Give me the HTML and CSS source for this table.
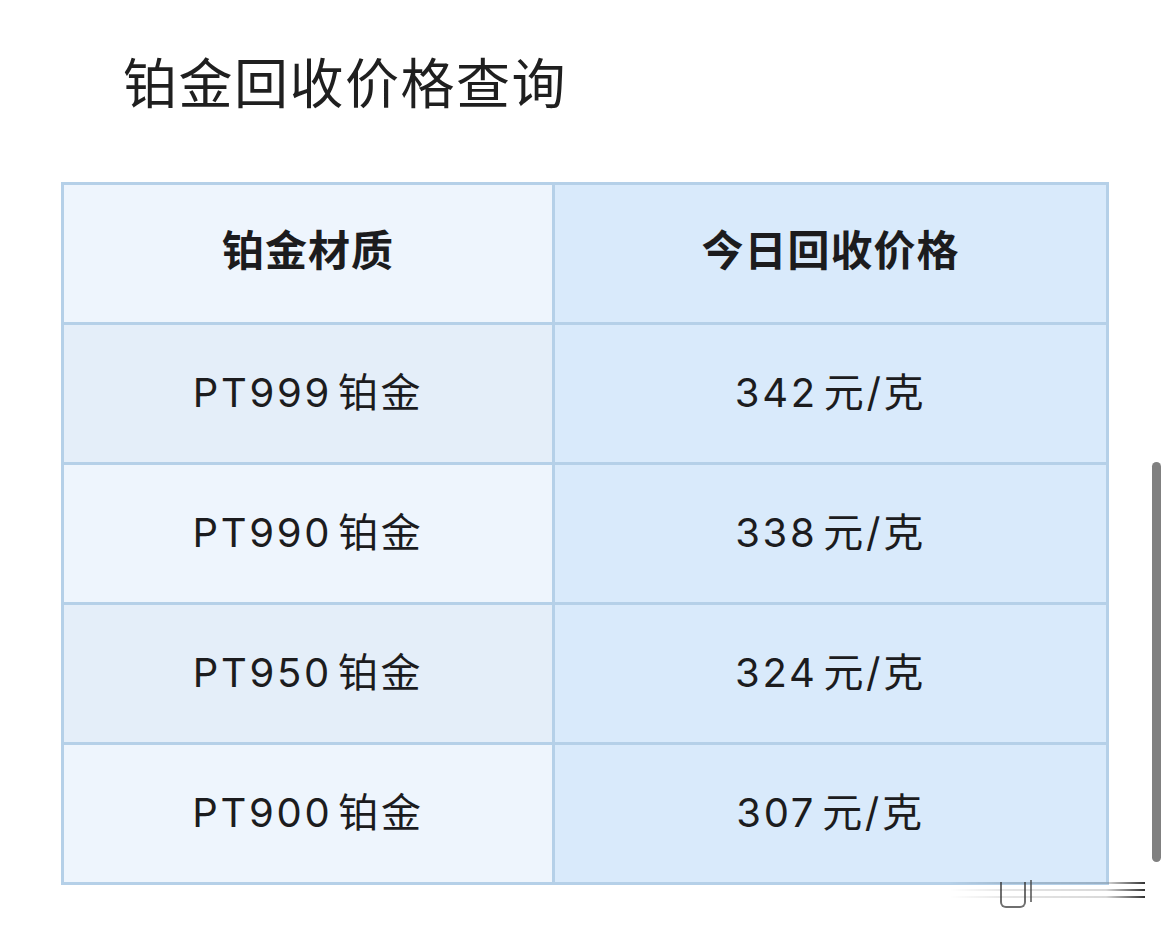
FILE: index.html
```html
<!DOCTYPE html>
<html lang="zh">
<head>
<meta charset="utf-8">
<title>铂金回收价格查询</title>
<link rel="stylesheet" href="styles.css">
</head>
<body>
<main class="page">
  <h1 class="title">铂金回收价格查询</h1>
  <div class="table">
    <div class="cell head left">铂金材质</div>
    <div class="cell head right">今日回收价格</div>
    <div class="cell left odd">PT999 铂金</div>
    <div class="cell right">342 元/克</div>
    <div class="cell left">PT990 铂金</div>
    <div class="cell right">338 元/克</div>
    <div class="cell left odd">PT950 铂金</div>
    <div class="cell right">324 元/克</div>
    <div class="cell left">PT900 铂金</div>
    <div class="cell right">307 元/克</div>
  </div>
</main>
<div class="scrollbar"></div>
<div class="watermark">
  <span class="wm-line l1"></span>
  <span class="wm-line l2"></span>
  <span class="wm-line l3"></span>
  <span class="wm-u"></span>
  <span class="wm-bar"></span>
</div>
</body>
</html>
```
FILE: styles.css
```css
html, body {
  margin: 0;
  padding: 0;
  background: #ffffff;
}
body {
  width: 1170px;
  height: 934px;
  overflow: hidden;
  position: relative;
  font-family: "Inter", "Noto Sans CJK SC", sans-serif;
  color: #1c1c1e;
}
.page {
  padding: 50px 0 0 61px;
}
.title {
  margin: 0 0 0 62px;
  font-family: "Noto Sans CJK SC", sans-serif;
  font-weight: 400;
  font-size: 54px;
  line-height: 62px;
  letter-spacing: 1.5px;
  color: #1f1f1f;
}
.table {
  margin-top: 70px;
  width: 1048px;
  box-sizing: border-box;
  display: grid;
  grid-template-columns: 488px 551px;
  grid-auto-rows: 137px;
  gap: 3px;
  padding: 3px;
  background: #b5d0e8;
}
.cell {
  display: flex;
  align-items: center;
  justify-content: center;
  padding-bottom: 8px;
  box-sizing: border-box;
  font-size: 40px;
  letter-spacing: 2.7px;
  word-spacing: -8px;
  color: #1c1c1e;
}
.cell.head {
  font-family: "Noto Sans CJK SC", sans-serif;
  font-weight: 700;
  font-size: 42px;
  letter-spacing: 1px;
  word-spacing: 0;
  padding-bottom: 12px;
}
.left {
  background: #eef5fd;
}
.left.odd {
  background: #e4eef9;
}
.right {
  background: #d9eafb;
}
.scrollbar {
  position: absolute;
  left: 1152px;
  top: 462px;
  width: 9px;
  height: 400px;
  border-radius: 5px;
  background: #808080;
}
.watermark {
  position: absolute;
  left: 930px;
  top: 876px;
  width: 215px;
  height: 36px;
  filter: blur(0.7px);
}
.wm-line {
  position: absolute;
  left: 20px;
  right: 0;
  height: 2px;
  background: linear-gradient(to right, rgba(0,0,0,0), rgba(0,0,0,0.1) 30%, rgba(0,0,0,0.15) 80%, rgba(0,0,0,0.8));
}
.l1 { top: 6px; }
.l2 { top: 13px; }
.l3 { top: 20px; }
.wm-u {
  position: absolute;
  left: 70px;
  top: 6px;
  width: 22px;
  height: 24px;
  border: 2px solid #333;
  border-top: none;
  border-radius: 0 0 6px 6px;
  opacity: 0.7;
}
.wm-bar {
  position: absolute;
  left: 100px;
  top: 4px;
  width: 2px;
  height: 22px;
  background: #444;
  opacity: 0.7;
}
```
